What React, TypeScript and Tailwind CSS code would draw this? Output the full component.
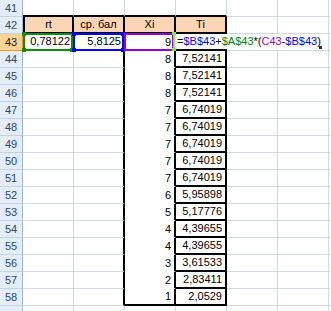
import React from "react";

const G = "border-[#d0d7e5]";

function RowHead({ n, sel = false, h = "h-[17px]" }: { n?: number; sel?: boolean; h?: string }) {
  return (
    <div
      className={`w-[23px] shrink-0 ${h} border-r border-b flex items-center justify-center ${
        sel
          ? "bg-[#f8d496] border-r-[#f29436] border-b-[#f29436] text-[#222222]"
          : "bg-[#e4ecf7] border-r-[#9eb6ce] border-b-[#c3d2e5] text-[#2d4868]"
      }`}
    >
      {n}
    </div>
  );
}

function C({ cls = "", children, h = "h-[17px]" }: { cls?: string; children?: React.ReactNode; h?: string }) {
  return (
    <div className={`w-[51px] shrink-0 ${h} border-r border-b ${G} flex items-center px-[2px] whitespace-nowrap ${cls}`}>
      {children}
    </div>
  );
}

const xi = [8, 8, 8, 7, 7, 7, 7, 7, 6, 5, 4, 4, 3, 2, 1];
const ti = [
  "7,52141",
  "7,52141",
  "7,52141",
  "6,74019",
  "6,74019",
  "6,74019",
  "6,74019",
  "6,74019",
  "5,95898",
  "5,17776",
  "4,39655",
  "4,39655",
  "3,61533",
  "2,83411",
  "2,0529",
];

export default function App() {
  return (
    <div className="w-[331px] h-[311px] overflow-hidden bg-white text-black text-[11px] leading-none font-['Liberation_Sans',Arial,sans-serif]">
      {/* Row 41 */}
      <div className="flex">
        <RowHead n={41} />
        <C cls="border-b-2 border-b-black" />
        <C cls="border-b-2 border-b-black" />
        <C cls="border-b-2 border-b-black" />
        <C cls="border-b-2 border-b-black" />
        <C />
        <C />
        <C />
      </div>
      {/* Row 42 */}
      <div className="flex">
        <RowHead n={42} />
        <C cls="bg-[#fcd5b4] border-l-2 border-l-black border-r-2 border-r-black border-b-2 border-b-black justify-center">rt</C>
        <C cls="bg-[#fcd5b4] border-r-2 border-r-black border-b-2 border-b-black justify-center">ср. бал</C>
        <C cls="bg-[#fcd5b4] border-r-2 border-r-black border-b-2 border-b-black justify-center">Xi</C>
        <C cls="bg-[#fcd5b4] border-r-2 border-r-black border-b-2 border-b-black justify-center">Ti</C>
        <C />
        <C />
        <C />
      </div>
      {/* Row 43 */}
      <div className="flex">
        <RowHead n={43} sel />
        <C cls="relative border-l-2 border-l-black border-r-2 border-r-black border-b-2 border-b-black justify-end">
          0,78122
          <span className="absolute -left-[2px] -top-[1px] -right-[1px] -bottom-[2px] border-2 border-[#0a8f0a]">
            <span className="absolute -left-[3px] -top-[3px] w-[4px] h-[4px] bg-[#0a8f0a]" />
            <span className="absolute -left-[3px] -bottom-[3px] w-[4px] h-[4px] bg-[#0a8f0a]" />
            <span className="absolute -right-[3px] -bottom-[3px] w-[4px] h-[4px] bg-[#0a8f0a]" />
          </span>
        </C>
        <C cls="relative border-r-2 border-r-black border-b-2 border-b-black justify-end">
          5,8125
          <span className="absolute -left-[1px] -top-[1px] -right-[1px] -bottom-[2px] border-2 border-[#0000ff]">
            <span className="absolute -left-[3px] -top-[3px] w-[4px] h-[4px] bg-[#0000ff]" />
            <span className="absolute -left-[3px] -bottom-[3px] w-[4px] h-[4px] bg-[#0000ff]" />
            <span className="absolute -right-[3px] -top-[3px] w-[4px] h-[4px] bg-[#0000ff]" />
            <span className="absolute -right-[3px] -bottom-[3px] w-[4px] h-[4px] bg-[#0000ff]" />
          </span>
        </C>
        <C cls="relative border-r-2 border-r-black border-b-white justify-end pr-[3px]">
          9
          <span className="absolute -left-[1px] -top-[1px] right-0 -bottom-[1px] border-2 border-[#9900cc]" />
        </C>
        <C cls="relative border-r-2 border-r-black border-b-2 border-b-black">
          <span className="absolute -left-[3px] -top-[2px] w-[2px] h-[19px] bg-[#77f23a] z-20">
            <span className="absolute -left-[1px] top-0 w-[4px] h-[3px] bg-[#77f23a]" />
            <span className="absolute -left-[1px] bottom-0 w-[4px] h-[3px] bg-[#77f23a]" />
          </span>
          <span className="absolute -left-[1px] top-0 h-[15px] w-[147px] bg-white z-10 flex items-center pl-[2px] whitespace-nowrap">
            <span>=</span>
            <span className="text-[#0000ff]">$B$43</span>
            <span>+</span>
            <span className="text-[#008000]">$A$43</span>
            <span>*</span>
            <span>(</span>
            <span className="text-[#9900cc]">C43</span>
            <span>-</span>
            <span className="text-[#0000ff]">$B$43</span>
            <span>)</span>
            <span className="absolute right-0 bottom-0 w-[3px] h-[3px] bg-[#333333]" />
          </span>
        </C>
        <C />
        <C />
        <C />
      </div>
      {/* Rows 44-58 */}
      {xi.map((x, i) => {
        const last = i === xi.length - 1;
        return (
          <div className="flex" key={i}>
            <RowHead n={44 + i} />
            <C />
            <C cls="border-r-2 border-r-black" />
            <C
              cls={
                last
                  ? "border-r-2 border-r-black border-b-2 border-b-black justify-end pr-[3px]"
                  : "border-r-2 border-r-black border-b-white justify-end pr-[3px]"
              }
            >
              {x}
            </C>
            <C cls="border-r-2 border-r-black border-b-2 border-b-black justify-end pr-[3px]">{ti[i]}</C>
            <C />
            <C />
            <C />
          </div>
        );
      })}
      {/* Row 59 partial */}
      <div className="flex">
        <RowHead h="h-[6px]" />
        <C h="h-[6px]" />
        <C h="h-[6px]" />
        <C h="h-[6px]" />
        <C h="h-[6px]" />
        <C h="h-[6px]" />
        <C h="h-[6px]" />
        <C h="h-[6px]" />
      </div>
    </div>
  );
}
